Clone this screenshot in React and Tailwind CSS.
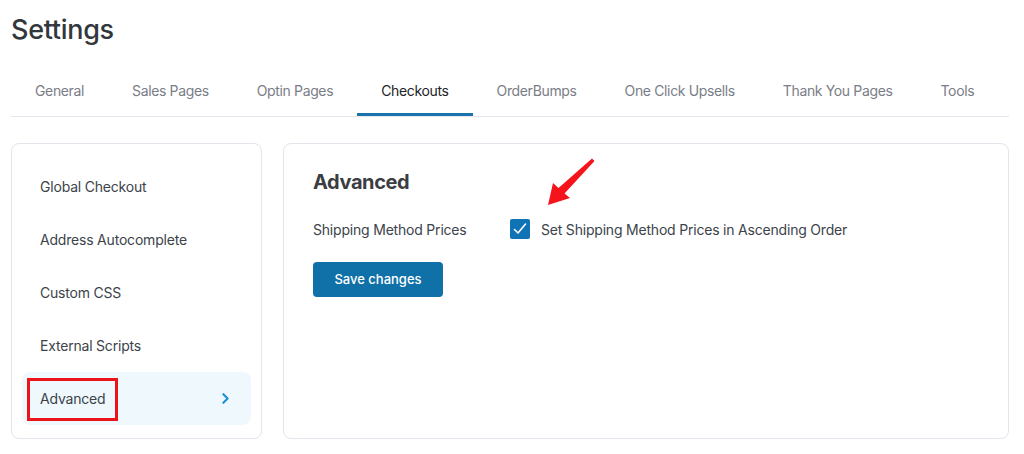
import { ChevronRight } from 'lucide-react';

const tabs = ['General', 'Sales Pages', 'Optin Pages', 'Checkouts', 'OrderBumps', 'One Click Upsells', 'Thank You Pages', 'Tools'];
const sideItems = ['Global Checkout', 'Address Autocomplete', 'Custom CSS', 'External Scripts', 'Advanced'];

function RedArrow() {
  return (
    <svg
      className="absolute left-[540px] top-[150px] pointer-events-none"
      width="60"
      height="60"
      viewBox="540 150 60 60"
    >
      <polygon points="548,205 553,183 558.5,188 592,158.5 594.5,161 564.5,193.5 570,198" fill="#f5141c" />
    </svg>
  );
}

export default function App() {
  return (
    <div className="relative min-h-[454px] bg-white pl-[11px] pr-[15px] pt-[14px] font-['Inter','Noto_Sans',sans-serif] text-[#3c434a]">
      {/* Title */}
      <h1 className="text-[27px] font-medium leading-[32px] text-[#32373c] tracking-[-0.3px]">Settings</h1>

      {/* Tabs */}
      <nav className="mt-[22px] flex border-b border-[#e6e7ee]">
        {tabs.map((t) => (
          <div
            key={t}
            className={`flex h-[48px] shrink-0 items-center whitespace-nowrap border-b-[3px] px-6 text-[14px] tracking-[-0.36px] ${
              t === 'Checkouts' ? 'border-[#1a73aa] text-[#1d2327]' : 'border-transparent text-[#7a7d86]'
            }`}
          >
            {t}
          </div>
        ))}
      </nav>

      {/* Panels */}
      <div className="mt-[26px] flex gap-[21px]">
        <aside className="h-[296px] w-[251px] shrink-0 rounded-[8px] border border-[#e3e4ec] px-[10px] pt-[16px]">
          {sideItems.map((item) => {
            const active = item === 'Advanced';
            return (
              <div
                key={item}
                className={`relative flex h-[53px] items-center justify-between rounded-[8px] pl-[18px] pr-[17px] text-[14px] tracking-[-0.2px] ${
                  active ? 'bg-[#eef8fd]' : ''
                }`}
              >
                <span>{item}</span>
                {active && (
                  <>
                    <ChevronRight size={17} strokeWidth={3} className="text-[#1e8fd8]" />
                    <div className="absolute left-[5px] top-[6px] h-[43px] w-[91px] border-[3px] border-[#ec141b]" />
                  </>
                )}
              </div>
            );
          })}
        </aside>

        <section className="h-[296px] flex-1 rounded-[8px] border border-[#e3e4ec] pl-[29px] pt-[26px]">
          <h2 className="text-[20px] font-bold leading-[24px] tracking-[-0.4px] text-[#3a3d42]">Advanced</h2>
          <div className="mt-[25px] flex h-[20px] items-center text-[14px] tracking-[-0.2px]">
            <span className="w-[197px] shrink-0">Shipping Method Prices</span>
            <span className="flex h-[20px] w-[20px] items-center justify-center rounded-[2px] bg-[#0f73b6]">
              <svg width="16" height="16" viewBox="0 0 16 16" fill="none" stroke="white" strokeWidth="1.6" strokeLinecap="round" strokeLinejoin="round">
                <path d="M2.5 8.5 6 12 13.5 3" />
              </svg>
            </span>
            <span className="ml-[11px]">Set Shipping Method Prices in Ascending Order</span>
          </div>
          <button className="mt-[23px] h-[35px] w-[130px] rounded-[4px] bg-[#0f71a8] text-[13px] font-medium text-white">
            Save changes
          </button>
        </section>
      </div>

      <RedArrow />
    </div>
  );
}
